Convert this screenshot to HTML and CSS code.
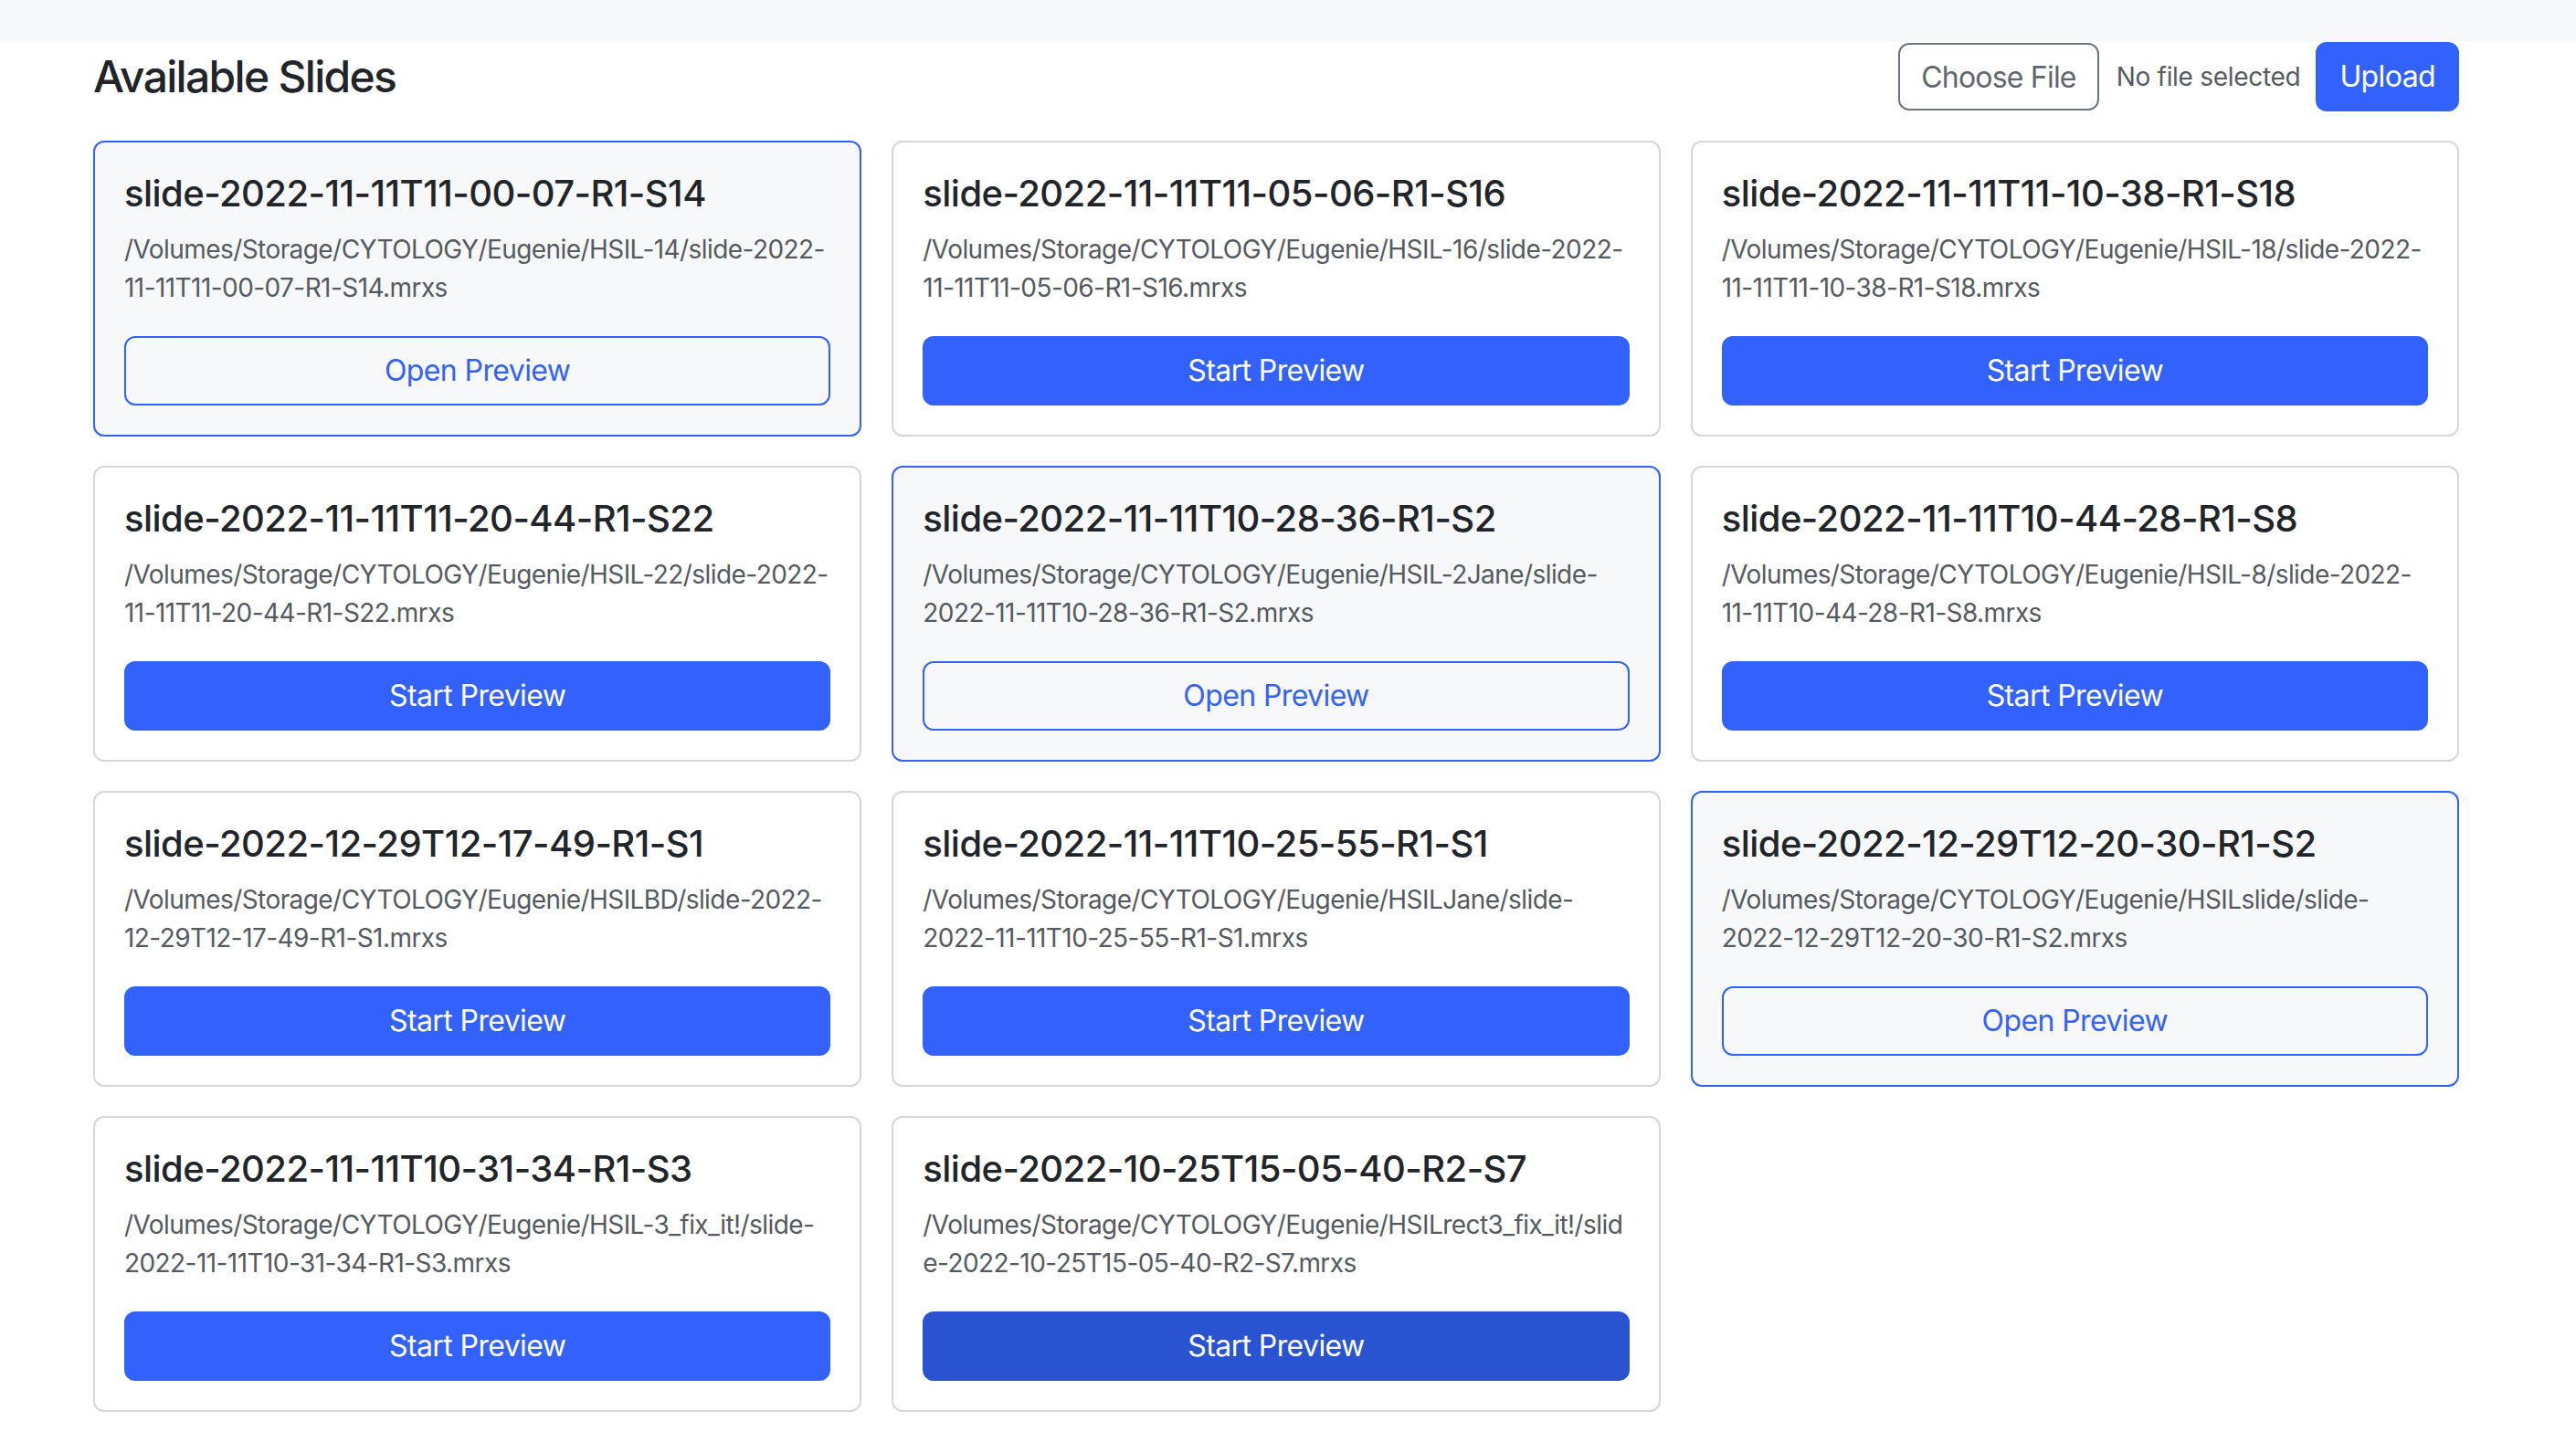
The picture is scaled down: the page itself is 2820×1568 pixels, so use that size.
FILE: index.html
```html
<!DOCTYPE html>
<html lang="en">
<head>
<meta charset="utf-8">
<title>Available Slides</title>
<link rel="stylesheet" href="styles.css">
</head>
<body>
<div class="topbar"></div>
<main class="container">
  <header class="header">
    <h4 class="page-title">Available Slides</h4>
    <div class="upload">
      <span class="choose-btn">Choose File</span>
      <span class="no-file">No file selected</span>
      <button class="btn btn-primary upload-btn">Upload</button>
    </div>
  </header>
  <section class="grid">
    <div class="card active">
      <h5 class="card-title">slide-2022-11-11T11-00-07-R1-S14</h5>
      <p class="card-text">/Volumes/Storage/CYTOLOGY/Eugenie/HSIL-14/slide-2022-<br>11-11T11-00-07-R1-S14.mrxs</p>
      <button class="btn btn-outline">Open Preview</button>
    </div>
    <div class="card">
      <h5 class="card-title">slide-2022-11-11T11-05-06-R1-S16</h5>
      <p class="card-text">/Volumes/Storage/CYTOLOGY/Eugenie/HSIL-16/slide-2022-<br>11-11T11-05-06-R1-S16.mrxs</p>
      <button class="btn btn-primary">Start Preview</button>
    </div>
    <div class="card">
      <h5 class="card-title">slide-2022-11-11T11-10-38-R1-S18</h5>
      <p class="card-text">/Volumes/Storage/CYTOLOGY/Eugenie/HSIL-18/slide-2022-<br>11-11T11-10-38-R1-S18.mrxs</p>
      <button class="btn btn-primary">Start Preview</button>
    </div>
    <div class="card">
      <h5 class="card-title">slide-2022-11-11T11-20-44-R1-S22</h5>
      <p class="card-text">/Volumes/Storage/CYTOLOGY/Eugenie/HSIL-22/slide-2022-<br>11-11T11-20-44-R1-S22.mrxs</p>
      <button class="btn btn-primary">Start Preview</button>
    </div>
    <div class="card active">
      <h5 class="card-title">slide-2022-11-11T10-28-36-R1-S2</h5>
      <p class="card-text">/Volumes/Storage/CYTOLOGY/Eugenie/HSIL-2Jane/slide-<br>2022-11-11T10-28-36-R1-S2.mrxs</p>
      <button class="btn btn-outline">Open Preview</button>
    </div>
    <div class="card">
      <h5 class="card-title">slide-2022-11-11T10-44-28-R1-S8</h5>
      <p class="card-text">/Volumes/Storage/CYTOLOGY/Eugenie/HSIL-8/slide-2022-<br>11-11T10-44-28-R1-S8.mrxs</p>
      <button class="btn btn-primary">Start Preview</button>
    </div>
    <div class="card">
      <h5 class="card-title">slide-2022-12-29T12-17-49-R1-S1</h5>
      <p class="card-text">/Volumes/Storage/CYTOLOGY/Eugenie/HSILBD/slide-2022-<br>12-29T12-17-49-R1-S1.mrxs</p>
      <button class="btn btn-primary">Start Preview</button>
    </div>
    <div class="card">
      <h5 class="card-title">slide-2022-11-11T10-25-55-R1-S1</h5>
      <p class="card-text">/Volumes/Storage/CYTOLOGY/Eugenie/HSILJane/slide-<br>2022-11-11T10-25-55-R1-S1.mrxs</p>
      <button class="btn btn-primary">Start Preview</button>
    </div>
    <div class="card active">
      <h5 class="card-title">slide-2022-12-29T12-20-30-R1-S2</h5>
      <p class="card-text">/Volumes/Storage/CYTOLOGY/Eugenie/HSILslide/slide-<br>2022-12-29T12-20-30-R1-S2.mrxs</p>
      <button class="btn btn-outline">Open Preview</button>
    </div>
    <div class="card">
      <h5 class="card-title">slide-2022-11-11T10-31-34-R1-S3</h5>
      <p class="card-text">/Volumes/Storage/CYTOLOGY/Eugenie/HSIL-3_fix_it!/slide-<br>2022-11-11T10-31-34-R1-S3.mrxs</p>
      <button class="btn btn-primary">Start Preview</button>
    </div>
    <div class="card">
      <h5 class="card-title">slide-2022-10-25T15-05-40-R2-S7</h5>
      <p class="card-text">/Volumes/Storage/CYTOLOGY/Eugenie/HSILrect3_fix_it!/slid<br>e-2022-10-25T15-05-40-R2-S7.mrxs</p>
      <button class="btn btn-primary hover">Start Preview</button>
    </div>
  </section>
</main>
</body>
</html>
```
FILE: styles.css
```css
* { box-sizing: border-box; }
html, body {
  margin: 0;
  background: #ffffff;
  font-family: Inter, "Noto Sans", "Liberation Sans", sans-serif;
  color: #212529;
}
.topbar {
  height: 46px;
  background: #f7f8fa;
}
.container {
  width: 2590px;
  margin-left: 102px;
}
.header {
  display: flex;
  justify-content: space-between;
  align-items: center;
  height: 76px;
  margin-bottom: 32px;
}
.page-title {
  margin: 0;
  font-size: 48px;
  font-weight: 550;
  line-height: 1.2;
  letter-spacing: -1.7px;
}
.upload {
  display: flex;
  align-items: center;
  height: 76px;
}
.choose-btn {
  display: flex;
  align-items: center;
  height: 74px;
  padding: 0 23px;
  border: 2px solid #6c757d;
  border-radius: 12px;
  font-size: 32px;
  color: #5f666d;
  letter-spacing: -0.8px;
}
.no-file {
  margin-left: 19px;
  margin-right: 17px;
  font-size: 28px;
  color: #555b60;
  letter-spacing: -0.3px;
}
.btn {
  display: block;
  height: 76px;
  border-radius: 12px;
  font-family: inherit;
  font-size: 32px;
  font-weight: 400;
  letter-spacing: -0.6px;
  line-height: 1;
  cursor: pointer;
}
.btn-primary {
  background: #3262fb;
  border: 2px solid #3262fb;
  color: #ffffff;
}
.btn-primary.hover {
  background: #2a53d1;
  border-color: #2a53d1;
}
.upload-btn {
  height: 76px;
  padding: 0 24px;
}
.btn-outline {
  background: transparent;
  border: 2px solid #3262fb;
  color: #3262fb;
}
.grid {
  display: grid;
  grid-template-columns: repeat(3, minmax(0, 1fr));
  column-gap: 33px;
  row-gap: 32px;
}
.card {
  min-width: 0;
  border: 2px solid #d6d6d6;
  border-radius: 12px;
  padding: 32px;
  background: #ffffff;
  overflow-wrap: break-word;
}
.card.active {
  border-color: #3262fb;
  background: #f7f8fa;
}
.card-title {
  margin: 0 0 16px;
  font-size: 40px;
  font-weight: 550;
  line-height: 48px;
  letter-spacing: -0.55px;
  white-space: nowrap;
}
.card-text {
  margin: 0 0 32px;
  font-size: 28px;
  line-height: 42px;
  color: #555a5f;
  letter-spacing: -0.57px;
  white-space: nowrap;
}
.card .btn {
  width: 100%;
}
```
